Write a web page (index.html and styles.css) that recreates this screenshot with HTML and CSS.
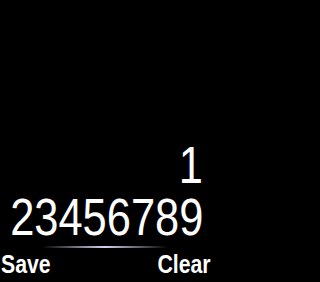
FILE: index.html
```html
<!DOCTYPE html>
<html>
<head>
<meta charset="utf-8">
<link rel="stylesheet" href="styles.css">
</head>
<body>
<div class="screen">
  <div class="display">
    <div class="line"><span class="digits">1</span></div>
    <div class="line"><span class="digits">23456789</span></div>
  </div>
  <div class="divider"></div>
  <div class="softkeys">
    <span class="key key-left">Save</span>
    <span class="key key-right">Clear</span>
  </div>
</div>
</body>
</html>
```
FILE: styles.css
```css
html, body {
  margin: 0;
  padding: 0;
  background: #000;
}
.screen {
  width: 212px;
  height: 282px;
  background: #000;
  color: #fff;
  font-family: "Liberation Sans", Arial, sans-serif;
  display: flex;
  flex-direction: column;
  justify-content: flex-end;
  overflow: hidden;
}
.display {
  display: flex;
  flex-direction: column;
  align-items: flex-end;
  padding-right: 9px;
}
.line {
  font-size: 52px;
  line-height: 52px;
  height: 52px;
  white-space: nowrap;
}
.digits {
  display: inline-block;
  transform: scaleX(0.835);
  transform-origin: right center;
}
.divider {
  margin: 3px 44px 0 42px;
  height: 2px;
  background: linear-gradient(to right, rgba(200,190,230,0), #d8d2f0 50%, rgba(200,190,230,0));
}
.softkeys {
  display: flex;
  justify-content: space-between;
  padding: 2px 1px 4px 1px;
}
.key {
  display: inline-block;
  font-size: 25px;
  line-height: 28px;
  font-weight: bold;
  transform: scaleX(0.85);
}
.key-left { transform-origin: left center; }
.key-right { transform-origin: right center; }
```
